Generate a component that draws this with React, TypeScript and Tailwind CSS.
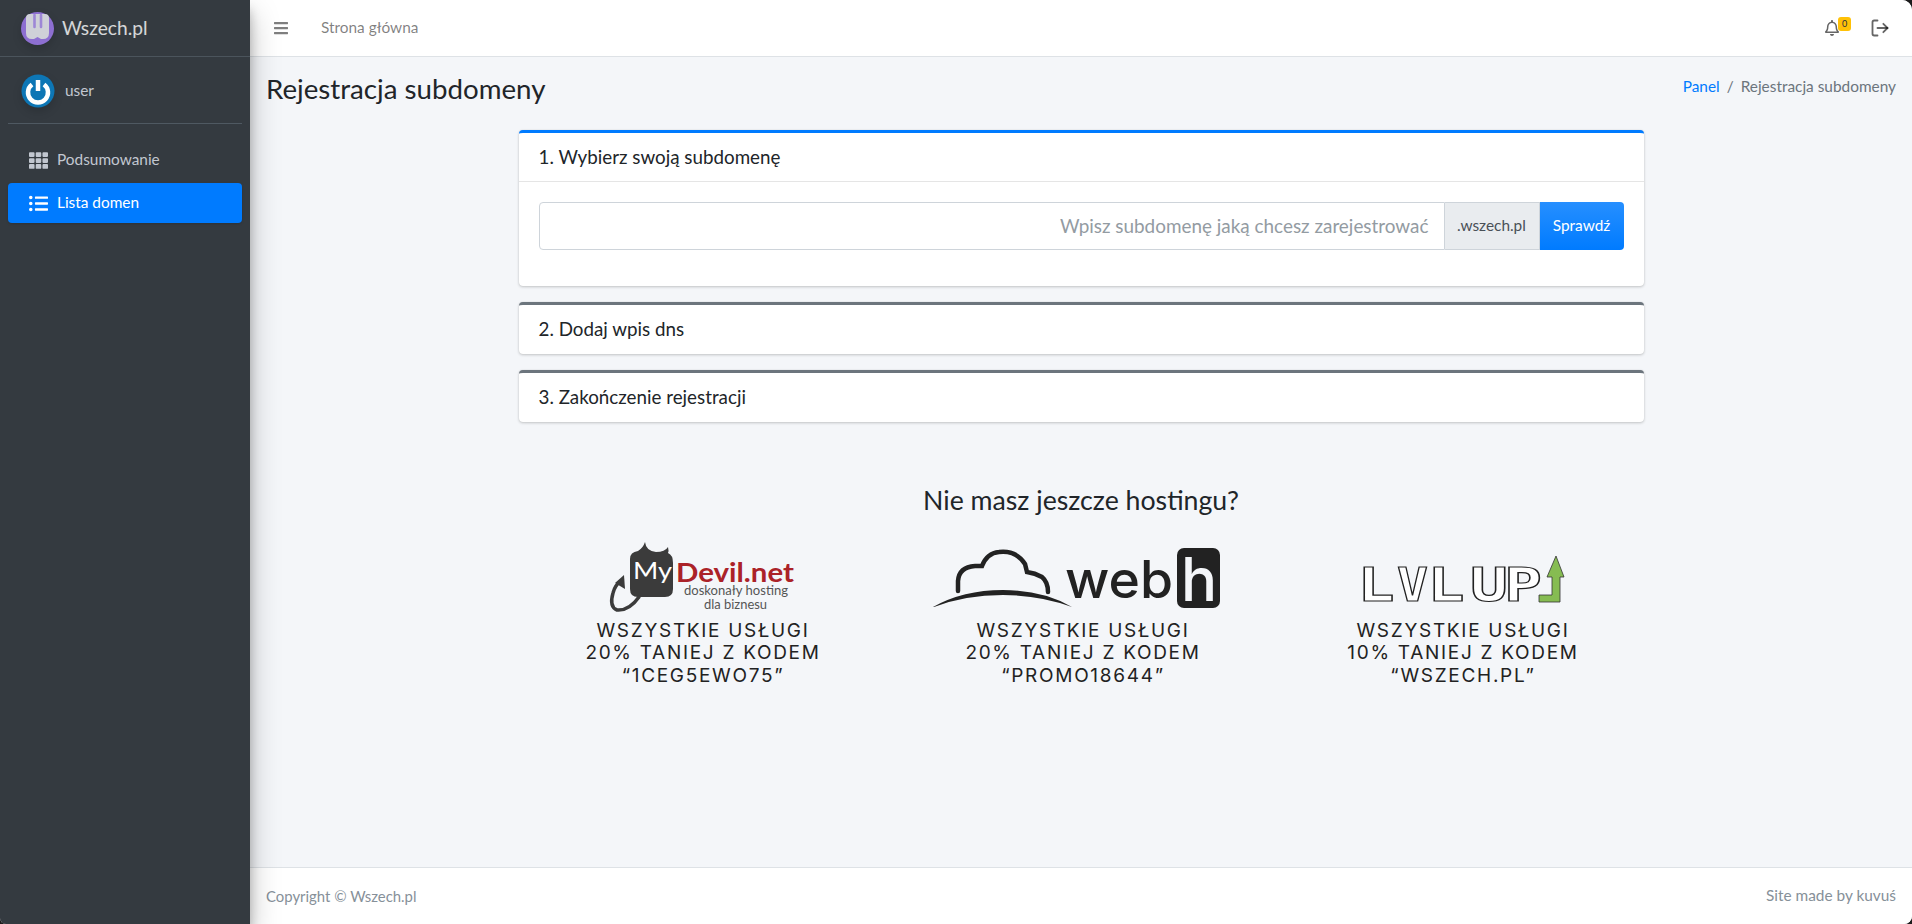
import React from 'react';
import { FaBars, FaListUl, FaRegBell, FaTh } from 'react-icons/fa';
import { LogOut } from 'lucide-react';

const BASE_FONT = { fontFamily: 'Lato, "Noto Sans", sans-serif' };

const PROMOS = [
  { lines: ['WSZYSTKIE USŁUGI', '20% TANIEJ Z KODEM', '“1CEG5EWO75”'], logo: 'devil' },
  { lines: ['WSZYSTKIE USŁUGI', '20% TANIEJ Z KODEM', '“PROMO18644”'], logo: 'webh' },
  { lines: ['WSZYSTKIE USŁUGI', '10% TANIEJ Z KODEM', '“WSZECH.PL”'], logo: 'lvlup' },
];

// x and stretched width of each letter of the LVL UP logo
const LVL_LETTERS = [
  { ch: 'L', x: 44.5, w: 37 },
  { ch: 'V', x: 84, w: 31 },
  { ch: 'L', x: 114.5, w: 37 },
  { ch: 'U', x: 157, w: 38 },
  { ch: 'P', x: 191, w: 38 },
];

const BrandLogo = () => (
  <svg width="33" height="33" viewBox="0 0 33 33" className="drop-shadow-lg">
    <circle cx="16.5" cy="16.5" r="16.5" fill="#8d6fd1" />
    <path d="M5 6 q0 -4 4 -4 h15 q4 0 4 4 v15 q0 6 -6 6 h-2 l-3.5 -2 l-3.5 2 h-2 q-6 0 -6 -6 z" fill="#cfd1d8" />
    <path d="M13.5 3 v12 M20 3 v12" stroke="#9d87d6" strokeWidth="2.6" strokeLinecap="round" />
  </svg>
);

const UserAvatar = () => (
  <svg width="34" height="34" viewBox="0 0 34 34" className="drop-shadow-lg">
    <circle cx="17" cy="17" r="16.5" fill="#0d76b5" />
    <path d="M11 10.5 a10 10 0 1 0 12 0" fill="none" stroke="#fff" strokeWidth="4.5" />
    <path d="M17 6 v11" stroke="#fff" strokeWidth="4.5" />
  </svg>
);

const DevilLogo = () => (
  <svg width="300" height="76" viewBox="0 0 300 76">
    <path d="M77 20 Q77 13 85 12 Q90 9 92 3 Q93 12 103 13 Q112 13 115 8 Q116 12 115 14 Q120 16 120 24 V50 Q120 58 112 58 H85 Q77 58 77 50 Z" fill="#3b3b3b" />
    <path d="M86 58 Q76 72 64 71 Q56 68 60 54 Q62 46 68 42" fill="none" stroke="#3b3b3b" strokeWidth="3.5" strokeLinecap="round" />
    <path d="M71 36 L72 50 L62 44 Z" fill="#3b3b3b" />
    <text x="80" y="40" fill="#fff" fontSize="23" textLength="39" lengthAdjust="spacingAndGlyphs" style={{ fontFamily: 'Lato, sans-serif' }}>My</text>
    <text x="123" y="43" fill="#ab2228" fontSize="26" fontWeight="700" textLength="118" lengthAdjust="spacingAndGlyphs" style={{ fontFamily: 'Lato, sans-serif' }}>Devil.net</text>
    <text x="131" y="56" fill="#555" fontSize="14" textLength="104" lengthAdjust="spacingAndGlyphs" style={{ fontFamily: 'Lato, sans-serif' }}>doskonały hosting</text>
    <text x="151" y="70" fill="#555" fontSize="14" textLength="63" lengthAdjust="spacingAndGlyphs" style={{ fontFamily: 'Lato, sans-serif' }}>dla biznesu</text>
  </svg>
);

const WebhLogo = () => (
  <svg width="300" height="76" viewBox="0 0 300 76">
    <path d="M25 52 v-10 q1 -14 17 -15 h7 q5 -13 17 -14 q17 -2 26 12 l2 8 q8 1 15 5 q6 5 6 15" fill="none" stroke="#222" strokeWidth="4.5" strokeLinecap="round" />
    <path d="M0 68 q30 -17 70 -17 q40 0 69 17 q-32 -12 -69 -12 q-38 0 -69 12 z" fill="#222" />
    <text x="132" y="59" fill="#222" fontSize="52" fontWeight="500" textLength="108" lengthAdjust="spacingAndGlyphs" style={{ fontFamily: 'Inter, sans-serif' }}>web</text>
    <rect x="244" y="9" width="43" height="60" rx="7" fill="#222" />
    <text x="248" y="62" fill="#f4f6f9" fontSize="60" fontWeight="500" style={{ fontFamily: 'Inter, sans-serif' }}>h</text>
  </svg>
);

const LvlUpLogo = () => (
  <svg width="300" height="76" viewBox="0 0 300 76">
    {LVL_LETTERS.map((l, i) => (
      <text key={i} x={l.x} y="62" fill="#fff" stroke="#222" strokeWidth="1.2" fontSize="47" fontWeight="700" textLength={l.w} lengthAdjust="spacingAndGlyphs" style={{ fontFamily: '"DejaVu Sans Mono", monospace' }}>{l.ch}</text>
    ))}
    <path d="M243 17 l-9 21 h5 v18 h-13 v7 h21 v-25 h4 z" fill="#86bc52" stroke="#333" strokeWidth="0.8" />
  </svg>
);

const LOGOS: Record<string, React.ReactNode> = {
  devil: <DevilLogo />,
  webh: <WebhLogo />,
  lvlup: <LvlUpLogo />,
};

const Sidebar = () => (
  <aside className="w-[250px] shrink-0 bg-[#343a40] shadow-[0_14px_28px_rgba(0,0,0,0.25),0_10px_10px_rgba(0,0,0,0.22)] z-10 flex flex-col">
    <div className="h-[57px] border-b border-[#4b545c] flex items-center pl-[21px] gap-[8px]">
      <BrandLogo />
      <span className="text-[19.2px] font-normal text-white/80">Wszech.pl</span>
    </div>
    <div className="mx-2 h-[67px] pt-[1px] border-b border-[#4f5962] flex items-center pl-[13px] gap-[10px]">
      <UserAvatar />
      <span className="text-[#c2c7d0]">user</span>
    </div>
    <nav className="px-2 pt-[16px] flex flex-col">
      <a className="h-10 flex items-center pl-[21px] gap-[9px] text-[#c2c7d0] rounded">
        <FaTh className="w-[19px] h-[19px]" />
        Podsumowanie
      </a>
      <a className="h-10 mt-[3px] flex items-center pl-[21px] gap-[9px] text-white bg-[#007bff] rounded shadow">
        <FaListUl className="w-[19px] h-[19px]" />
        Lista domen
      </a>
    </nav>
  </aside>
);

const Topbar = () => (
  <header className="h-[57px] shrink-0 bg-white border-b border-[#dee2e6] flex items-center pl-[24px] pr-[22px]">
    <FaBars className="w-[14px] h-4 text-black/50" />
    <span className="ml-[33px] text-black/50">Strona główna</span>
    <div className="ml-auto flex items-center gap-[30px]">
      <div className="relative">
        <FaRegBell className="w-4 h-4 text-black/60" />
        <span className="absolute -top-[3px] -right-[11px] w-[13px] h-[14px] rounded-[3px] bg-[#ffc107] text-[9px] leading-[14px] text-center text-[#1f2d3d]">0</span>
      </div>
      <LogOut className="w-5 h-5 text-black/60" strokeWidth={2.2} />
    </div>
  </header>
);

const StepCard = ({ title, active, children }: { title: string; active?: boolean; children?: React.ReactNode }) => (
  <div className={`bg-white rounded border-t-[3px] shadow-[0_0_1px_rgba(0,0,0,0.125),0_1px_3px_rgba(0,0,0,0.2)] mb-4 ${active ? 'border-[#007bff]' : 'border-[#6c757d]'}`}>
    <div className={`h-[49px] flex items-center px-5 text-[18.8px] text-[#212529] ${active ? 'border-b border-black/10' : ''}`}>{title}</div>
    {children}
  </div>
);

const App: React.FC = () => {
  return (
    <div className="h-screen w-full bg-[#1c1c1c]">
      <div className="flex h-full w-full overflow-hidden rounded-tr-[10px] rounded-br-[8px] rounded-bl-[6px] bg-[#f4f6f9] text-[15.4px] text-[#212529]" style={BASE_FONT}>
        <Sidebar />
        <div className="flex-1 min-w-0 flex flex-col">
          <Topbar />
          <main className="flex-1 min-h-0 flex flex-col">
            <div className="flex items-center justify-between px-4 h-[73px] pb-[9px]">
              <h1 className="text-[27.7px] font-normal text-[#212529]">Rejestracja subdomeny</h1>
              <div className="flex items-center gap-[7px] mb-[4px] text-[#6c757d]">
                <a className="text-[#007bff]">Panel</a>
                <span>/</span>
                <span>Rejestracja subdomeny</span>
              </div>
            </div>

            <div className="w-[1125px] mx-auto">
              <StepCard title="1. Wybierz swoją subdomenę" active>
                <div className="p-5">
                  <div className="flex h-12 mb-4">
                    <div className="flex-1 border border-[#ced4da] rounded-l flex items-center justify-end pr-[15px] text-[18.9px] text-[#939ba2] bg-white">
                      Wpisz subdomenę jaką chcesz zarejestrować
                    </div>
                    <div className="w-[95px] border border-l-0 border-[#ced4da] bg-[#e9ecef] text-[#495057] flex items-center justify-center">.wszech.pl</div>
                    <button className="w-[84px] bg-[linear-gradient(180deg,#268fff,#007bff)] text-white rounded-r">Sprawdź</button>
                  </div>
                </div>
              </StepCard>
              <StepCard title="2. Dodaj wpis dns" />
              <StepCard title="3. Zakończenie rejestracji" />
            </div>

            <h3 className="text-center text-[26.7px] font-normal text-[#212529] mt-[45px] leading-[34px]">Nie masz jeszcze hostingu?</h3>

            <div className="w-[1140px] ml-[263px] grid grid-cols-3 mt-[22px]">
              {PROMOS.map((promo, i) => (
                <div key={i} className="flex flex-col items-center">
                  {LOGOS[promo.logo]}
                  <div className="mt-[5px] text-center text-[19px] font-normal leading-[22.4px] tracking-[1.7px] text-[#222]" style={{ fontFamily: 'Inter, sans-serif' }}>
                    {promo.lines.map(line => <div key={line}>{line}</div>)}
                  </div>
                </div>
              ))}
            </div>
          </main>
          <footer className="h-[57px] shrink-0 bg-white border-t border-[#dee2e6] flex items-center justify-between px-4 text-[#869099]">
            <span className="text-[14.9px]">Copyright © Wszech.pl</span>
            <span>Site made by kuvuś</span>
          </footer>
        </div>
      </div>
    </div>
  );
};

export default App;
